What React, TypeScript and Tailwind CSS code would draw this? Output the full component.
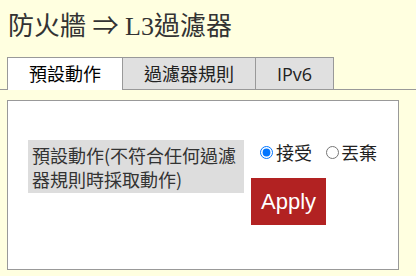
import { useState } from "react"

const cjk = '"Noto Sans CJK TC", "Liberation Sans", sans-serif'

const tabs = ["預設動作", "過濾器規則", "IPv6"]

export default function App() {
  const [active, setActive] = useState(0)
  const [action, setAction] = useState("accept")

  return (
    <div
      className="w-[416px] h-[276px] overflow-hidden bg-[#ffffe0] text-[#333]"
      style={{ fontFamily: cjk }}
    >
      {/* Title */}
      <h1
        className="pl-[8px] pt-[8px] text-[26px] leading-[32px] font-normal text-[#333]"
        style={{ fontFamily: '"Liberation Serif", "Noto Sans CJK TC", serif' }}
      >
        防火牆 <span style={{ fontFamily: cjk }}>⇒</span> L3過濾器
      </h1>

      {/* Tabs */}
      <ul className="mt-[14px] flex pl-[7px] border-b border-[#999]">
        {tabs.map((t, i) => (
          <li
            key={t}
            onClick={() => setActive(i)}
            className={
              i === active
                ? "-mb-px h-[33px] px-[21px] border border-b-0 border-[#999] bg-white text-[18px] leading-[31px] text-black cursor-pointer"
                : "-ml-px first:ml-0 h-[32px] px-[21px] border border-b-0 border-[#999] bg-[#e0e0e0] text-[18px] leading-[31px] text-[#222] cursor-pointer"
            }
          >
            {t === "IPv6" ? (
              <span style={{ fontFamily: '"Open Sans", sans-serif' }}>{t}</span>
            ) : (
              t
            )}
          </li>
        ))}
      </ul>

      {/* Panel */}
      <div className="mt-[10px] ml-[7px] mr-[17px] h-[170px] border border-[#999] bg-white pt-[39px] pl-[20px]">
        <div className="flex items-start gap-[7px]">
          <div className="w-[216px] bg-[#dddddd] px-[4px] pt-[3px] pb-[2px] text-[18px] leading-[24px] text-[#333]">
            預設動作(不符合任何過濾器規則時採取動作)
          </div>
          <div className="flex flex-col items-start">
            <div className="flex h-[24px] items-center pl-[9px] text-[18px] text-[#222]">
              <label className="flex items-center gap-[3px] cursor-pointer">
                <input
                  type="radio"
                  name="action"
                  checked={action === "accept"}
                  onChange={() => setAction("accept")}
                  className="m-0 w-[13px] h-[13px]"
                />
                接受
              </label>
              <label className="ml-[14px] flex items-center gap-[2px] cursor-pointer">
                <input
                  type="radio"
                  name="action"
                  checked={action === "drop"}
                  onChange={() => setAction("drop")}
                  className="m-0 w-[13px] h-[13px]"
                />
                丟棄
              </label>
            </div>
            <button
              className="mt-[14px] h-[47px] px-[10px] bg-[#b22222] text-white text-[22px]"
              style={{ fontFamily: '"Liberation Sans", sans-serif' }}
            >
              Apply
            </button>
          </div>
        </div>
      </div>
    </div>
  )
}
